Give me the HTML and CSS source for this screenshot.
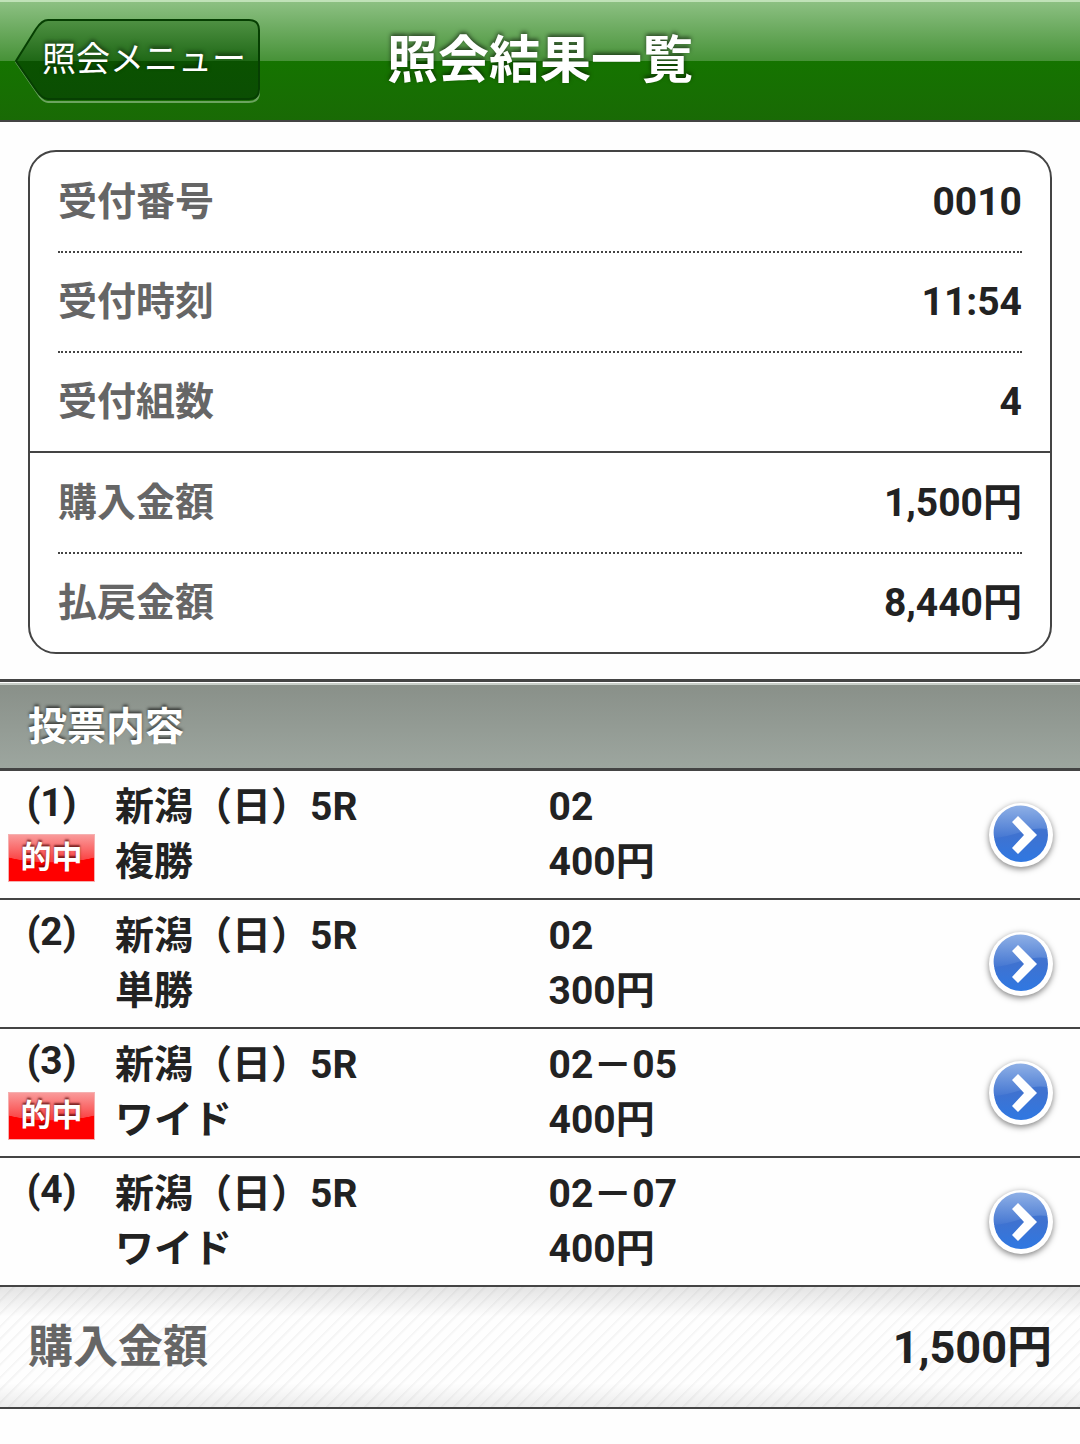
FILE: index.html
```html
<!DOCTYPE html>
<html lang="ja">
<head>
    <meta charset="UTF-8">
    <meta name="viewport" content="width=device-width, initial-scale=1.0">
    <title>照会結果一覧</title>
    <link rel="stylesheet" href="styles.css">
</head>
<body>
    <!-- Gradients and arrow shared by the list rows -->
    <svg class="defs" width="0" height="0" aria-hidden="true">
        <defs>
            <linearGradient id="arrowBase" x1="0" y1="0" x2="0" y2="1">
                <stop offset="0" stop-color="#4a7bd0"/>
                <stop offset="0.5" stop-color="#3f72d0"/>
                <stop offset="1" stop-color="#2f78e2"/>
            </linearGradient>
            <linearGradient id="arrowGloss" x1="0" y1="0" x2="0" y2="1">
                <stop offset="0" stop-color="#8fb0e6"/>
                <stop offset="1" stop-color="#4577d2"/>
            </linearGradient>
        </defs>
        <symbol id="arrow" viewBox="0 0 66 66">
            <circle cx="33" cy="33" r="32" fill="#fff"/>
            <circle cx="33" cy="33" r="27" fill="url(#arrowBase)"/>
            <path d="M6.2 36A27 27 0 1 1 59.4 27Q48 25 33 30T6.2 36Z" fill="url(#arrowGloss)"/>
            <path d="M30 14L49 33L30 52L24 46L36 33L24 20Z" fill="#fff"/>
        </symbol>
    </svg>

    <header class="header">
        <a class="back-btn" href="#">
            <svg class="back-shape" viewBox="0 0 246 84" preserveAspectRatio="none" aria-hidden="true">
                <defs>
                    <linearGradient id="backFill" x1="0" y1="0" x2="0" y2="1">
                        <stop offset="0" stop-color="#4f9143"/>
                        <stop offset="0.52" stop-color="#1f6816"/>
                        <stop offset="0.52" stop-color="#0a5200"/>
                        <stop offset="1" stop-color="#0b4e03"/>
                    </linearGradient>
                </defs>
                <path d="M34 3H235Q245 3 245 13V73Q245 83 235 83H34Q30 83 26 78L2 43L26 8Q30 3 34 3Z" fill="none" stroke="#6ba45f" stroke-width="2"/>
                <path d="M34 1H235Q245 1 245 11V70Q245 80 235 80H34Q28 80 22 71L2 42L22 10Q28 1 34 1Z" fill="url(#backFill)" stroke="#063f02" stroke-width="2"/>
            </svg>
            <span class="back-label">照会メニュー</span>
        </a>
        <h1>照会結果一覧</h1>
    </header>

    <main>
        <div class="summary">
            <dl class="summary-group">
                <div class="summary-row"><dt>受付番号</dt><dd>0010</dd></div>
                <div class="summary-row"><dt>受付時刻</dt><dd>11:54</dd></div>
                <div class="summary-row"><dt>受付組数</dt><dd>4</dd></div>
            </dl>
            <dl class="summary-group">
                <div class="summary-row"><dt>購入金額</dt><dd>1,500円</dd></div>
                <div class="summary-row"><dt>払戻金額</dt><dd>8,440円</dd></div>
            </dl>
        </div>

        <h2 class="section-title">投票内容</h2>

        <ul class="bets">
            <li>
                <a class="bet" href="#">
                    <span class="bet-no">(1)<span class="hit">的中</span></span>
                    <span class="bet-cell">新潟（日）5R<br>複勝</span>
                    <span class="bet-cell">02<br>400円</span>
                    <svg class="bet-arrow" aria-hidden="true"><use href="#arrow"/></svg>
                </a>
            </li>
            <li>
                <a class="bet" href="#">
                    <span class="bet-no">(2)</span>
                    <span class="bet-cell">新潟（日）5R<br>単勝</span>
                    <span class="bet-cell">02<br>300円</span>
                    <svg class="bet-arrow" aria-hidden="true"><use href="#arrow"/></svg>
                </a>
            </li>
            <li>
                <a class="bet" href="#">
                    <span class="bet-no">(3)<span class="hit">的中</span></span>
                    <span class="bet-cell">新潟（日）5R<br>ワイド</span>
                    <span class="bet-cell">02－05<br>400円</span>
                    <svg class="bet-arrow" aria-hidden="true"><use href="#arrow"/></svg>
                </a>
            </li>
            <li>
                <a class="bet" href="#">
                    <span class="bet-no">(4)</span>
                    <span class="bet-cell">新潟（日）5R<br>ワイド</span>
                    <span class="bet-cell">02－07<br>400円</span>
                    <svg class="bet-arrow" aria-hidden="true"><use href="#arrow"/></svg>
                </a>
            </li>
        </ul>

        <dl class="total">
            <dt>購入金額</dt>
            <dd>1,500円</dd>
        </dl>
    </main>
</body>
</html>
```
FILE: styles.css
```css
/* General Reset */
* {
    margin: 0;
    padding: 0;
    box-sizing: border-box;
}

body {
    background-color: #fefefe;
    font-family: Roboto, 'Noto Sans CJK JP', sans-serif;
    font-size: 39px;
    font-weight: 700;
    line-height: 55px;
    color: #222222;
}

a {
    color: inherit;
    text-decoration: none;
}

.defs {
    position: absolute;
}

/* Header */
.header {
    display: grid;
    grid-template-columns: 1fr auto 1fr;
    align-items: center;
    height: 122px;
    padding: 2px 14px 0;
    border-bottom: 2px solid #444444;
    background: linear-gradient(#c0e2b8 2px, #8cc082 2px, #479238 61px, #157400 61px, #196a05);
    color: #ffffff;
}

.header h1 {
    font-size: 51px;
    line-height: 60px;
    text-shadow: 0 -2px 4px rgba(0, 0, 0, 0.6);
}

.back-btn {
    position: relative;
    justify-self: start;
    padding: 12px 14px 16px 28px;
    font-size: 34px;
    font-weight: 400;
    line-height: 56px;
    text-shadow: 0 -2px 4px rgba(0, 0, 0, 0.6);
}

/* Button outline lies behind the label */
.back-shape {
    position: absolute;
    inset: 0;
    width: 100%;
    height: 100%;
}

.back-label {
    position: relative;
}

/* Summary box */
.summary {
    margin: 28px 28px 25px;
    border: 2px solid #444444;
    border-radius: 28px;
    background-color: #ffffff;
}

.summary-group {
    padding: 1px 28px 0;
}

.summary-group + .summary-group {
    border-top: 2px solid #444444;
}

.summary-row {
    display: flex;
    justify-content: space-between;
    padding: 22px 0 21px;
    border-bottom: 2px dotted #444444;
}

.summary-row:last-child {
    border-bottom: none;
}

dt {
    color: #666666;
}

/* Section bar */
.section-title {
    padding: 18px 28px 13px;
    border-top: 3px solid #444444;
    border-bottom: 3px solid #444444;
    background: linear-gradient(#ffffff 1px, #c8cec8 1px, #c8cec8 3px, #899089 3px, #9da69f);
    color: #ffffff;
    font-size: 39px;
    text-shadow: 0 -2px 3px rgba(0, 0, 0, 0.6);
}

/* Bet list */
.bets {
    list-style: none;
}

.bet {
    display: grid;
    grid-template-columns: 107px 1fr 1fr 72px;
    padding: 8px 26px 7px 8px;
    border-bottom: 2px solid #444444;
}

.bet-no {
    width: 87px;
    line-height: 48px;
    text-align: center;
}

.bet-cell {
    padding: 1px 0;
}

.hit {
    display: block;
    margin-top: 7px;
    border: 1px solid #f5b0b0;
    background:
        radial-gradient(ellipse 90% 60% at 50% 0, transparent 98%, #ff0000 100%),
        linear-gradient(#f99a9a, #fb3c3c 60%);
    color: #ffffff;
    font-size: 31px;
    line-height: 46px;
    text-shadow: 0 -2px 2px rgba(70, 0, 0, 0.7);
}

.bet-arrow {
    align-self: center;
    justify-self: end;
    width: 66px;
    height: 66px;
    filter: drop-shadow(0 2px 3px rgba(0, 0, 0, 0.5));
}

/* Total */
.total {
    display: flex;
    justify-content: space-between;
    padding: 31px 28px 29px;
    border-bottom: 2px solid #444444;
    background:
        linear-gradient(rgba(0, 0, 0, 0.1), transparent 25%, transparent 80%, rgba(0, 0, 0, 0.07)),
        repeating-linear-gradient(135deg, #f5f5f5 0, #f5f5f5 1px, #fefefe 3px, #fefefe 9px);
    font-size: 45px;
    line-height: 60px;
}
```
